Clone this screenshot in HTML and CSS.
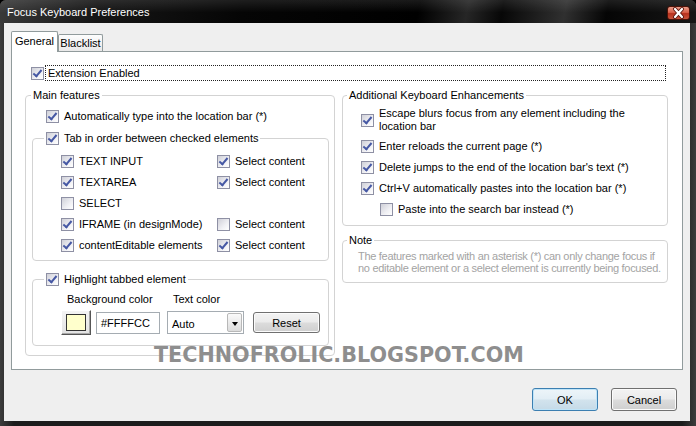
FILE: index.html
```html
<!DOCTYPE html>
<html>
<head>
    <title>Focus Keyboard Preferences</title>
    <link rel="stylesheet" href="styles.css">
</head>
<body>
    <div class="window">
        <div class="titlebar">
            <span class="title">Focus Keyboard Preferences</span>
            <span class="close">
                <svg width="23" height="14" viewBox="0 0 23 14">
                    <path d="M8 3 L15 11 M15 3 L8 11" stroke="#5a1810" stroke-width="4" stroke-linecap="round"/>
                    <path d="M8 3 L15 11 M15 3 L8 11" stroke="#fff" stroke-width="2.2" stroke-linecap="round"/>
                </svg>
            </span>
        </div>
        <div class="client">
            <div class="tabs">
                <div class="tab selected">General</div>
                <div class="tab">Blacklist</div>
            </div>
            <div class="panel">
                <div class="ext-row">
                    <span class="cb on"></span>
                    <span class="focus-label">Extension Enabled</span>
                </div>
                <div class="columns">
                    <fieldset class="group main">
                        <legend>Main features</legend>
                        <div class="row indent"><span class="cb on"></span>Automatically type into the location bar (*)</div>
                        <fieldset class="group sub">
                            <legend><span class="cb on"></span>Tab in order between checked elements</legend>
                            <div class="elements">
                                <div class="row"><span class="cb on"></span>TEXT INPUT</div>
                                <div class="row"><span class="cb on"></span>Select content</div>
                                <div class="row"><span class="cb on"></span>TEXTAREA</div>
                                <div class="row"><span class="cb on"></span>Select content</div>
                                <div class="row"><span class="cb"></span>SELECT</div>
                                <div class="row"></div>
                                <div class="row"><span class="cb on"></span>IFRAME (in designMode)</div>
                                <div class="row"><span class="cb"></span>Select content</div>
                                <div class="row"><span class="cb on"></span>contentEditable elements</div>
                                <div class="row"><span class="cb on"></span>Select content</div>
                            </div>
                        </fieldset>
                        <fieldset class="group sub highlight">
                            <legend><span class="cb on"></span>Highlight tabbed element</legend>
                            <div class="color-labels">
                                <span class="bg-label">Background color</span>
                                <span>Text color</span>
                            </div>
                            <div class="color-controls">
                                <span class="color-btn"><span class="swatch"></span></span>
                                <span class="textbox">#FFFFCC</span>
                                <span class="select">
                                    <span class="select-value">Auto</span>
                                    <span class="arrow"><span class="tri"></span></span>
                                </span>
                                <button class="btn reset">Reset</button>
                            </div>
                        </fieldset>
                    </fieldset>
                    <div class="right-col">
                        <fieldset class="group extra">
                            <legend>Additional Keyboard Enhancements</legend>
                            <div class="row two-line"><span class="cb on"></span><span>Escape blurs focus from any element including the<br>location bar</span></div>
                            <div class="row"><span class="cb on"></span>Enter reloads the current page (*)</div>
                            <div class="row"><span class="cb on"></span>Delete jumps to the end of the location bar's text (*)</div>
                            <div class="row"><span class="cb on"></span>Ctrl+V automatically pastes into the location bar (*)</div>
                            <div class="row nested"><span class="cb"></span>Paste into the search bar instead (*)</div>
                        </fieldset>
                        <fieldset class="group note">
                            <legend>Note</legend>
                            <p>The features marked with an asterisk (*) can only change focus if<br>no editable element or a select element is currently being focused.</p>
                        </fieldset>
                    </div>
                </div>
            </div>
            <div class="buttons">
                <button class="btn default">OK</button>
                <button class="btn">Cancel</button>
            </div>
        </div>
        <div class="watermark">TECHNOFROLIC.BLOGSPOT.COM</div>
    </div>
</body>
</html>
```

FILE: styles.css
```css
html, body {
    margin: 0;
}

body {
    width: 696px;
    height: 426px;
    overflow: hidden;
    background: #000;
    font-family: "Liberation Sans", Arial, sans-serif;
    font-size: 11px;
    color: #000;
}

.window {
    position: relative;
    width: 696px;
    height: 426px;
    display: flex;
    flex-direction: column;
    background: linear-gradient(90deg, #3c3c3c, #1c1c1c 2%, #1c1c1c 98%, #3c3c3c);
    border-radius: 6px 6px 0 0;
    overflow: hidden;
}

.titlebar {
    height: 23px;
    flex: none;
    display: flex;
    align-items: center;
    justify-content: space-between;
    padding: 0 6px 0 7px;
    color: #fff;
    background:
        linear-gradient(180deg, rgba(255, 255, 255, 0.1), rgba(255, 255, 255, 0) 55%),
        linear-gradient(100deg, #3a3a3a 0%, #161616 14%, #050505 35%, #000 60%, #262626 67%, #070707 72%, #303030 81%, #050505 87%, #161616 100%);
}

.title {
    font-size: 11px;
    padding-top: 1px;
}

.close {
    display: flex;
    width: 23px;
    height: 14px;
    margin-top: 2px;
    border-radius: 3px;
    box-sizing: border-box;
    border: 1px solid #4a1208;
    background: linear-gradient(#e89a88, #d8614a 45%, #b8301c 55%, #c8543c);
}

.close svg {
    margin: -1px;
}

.client {
    flex: 1;
    margin: 0 6px 5px 4px;
    padding: 8px 7px 0 7px;
    background: #efefef;
    display: flex;
    flex-direction: column;
}

/* tabs */
.tabs {
    display: flex;
    align-items: flex-end;
    height: 21px;
    margin-bottom: -1px;
    position: relative;
    z-index: 1;
}

.tab {
    box-sizing: border-box;
    border: 1px solid #919b9c;
    border-bottom: none;
    text-align: center;
    height: 17px;
    line-height: 16px;
    width: 45px;
    margin-bottom: 1px;
    background: linear-gradient(#fdfdfd, #e9e9e9);
    border-radius: 2px 2px 0 0;
}

.tab.selected {
    width: 47px;
    height: 21px;
    line-height: 19px;
    margin-bottom: 0;
    background: #fff;
}

.panel {
    height: 319px;
    flex: none;
    box-sizing: border-box;
    border: 1px solid #919b9c;
    background: #fff;
    padding: 13px 14px 0 13px;
}

/* checkboxes */
.cb {
    display: inline-block;
    flex: none;
    position: relative;
    width: 13px;
    height: 13px;
    box-sizing: border-box;
    border: 1px solid #8e90a4;
    background: linear-gradient(135deg, #cfd0d8, #f0f0f4 60%, #fff);
    margin-right: 5px;
    vertical-align: -3px;
}

.cb.on::after {
    content: "";
    position: absolute;
    left: 3px;
    top: 0px;
    width: 3px;
    height: 7px;
    border: solid #4658a4;
    border-width: 0 2px 2px 0;
    transform: rotate(40deg);
}

.ext-row {
    display: flex;
    align-items: center;
    height: 16px;
    margin: 0 2px 0 6px;
}

.ext-row .cb {
    margin-right: 1px;
}

.focus-label {
    flex: 1;
    border: 1px dotted #222;
    padding-left: 2px;
    line-height: 14px;
}

.columns {
    display: flex;
    align-items: flex-start;
    gap: 7px;
    margin-top: 7px;
}

/* group boxes */
fieldset.group {
    margin: 0;
    min-width: 0;
    border: 1px solid #d3d3d3;
    border-radius: 4px;
}

fieldset.group legend {
    padding: 0 2px;
    line-height: 14px;
}

fieldset.sub legend {
    display: flex;
    align-items: center;
}

.row {
    display: flex;
    align-items: center;
    padding: 4px 0;
    line-height: 13px;
    white-space: nowrap;
}

.main {
    width: 310px;
    box-sizing: border-box;
    padding: 4px 5px 9px 5px;
}

.row.indent {
    margin-left: 15px;
}

.sub {
    margin: 4px 0 0 1px !important;
    padding: 6px 5px 4px 11px;
}

.elements {
    display: grid;
    grid-template-columns: 156px auto;
    margin-left: 17px;
}

.elements .row {
    height: 13px;
}

.sub.highlight {
    margin-top: 11px !important;
    padding: 7px 5px 10px 11px;
}

.color-labels {
    display: flex;
    line-height: 13px;
    margin-left: 23px;
}

.bg-label {
    width: 106px;
}

.color-controls {
    display: flex;
    align-items: center;
    height: 25px;
    margin: 4px 0 0 17px;
}

.color-btn {
    width: 30px;
    height: 25px;
    box-sizing: border-box;
    display: flex;
    align-items: center;
    justify-content: center;
    border: 1px solid;
    border-color: #fff #555 #555 #fff;
    box-shadow: inset -1px -1px #a8a8a8;
    background: linear-gradient(#f4f4f4, #e2e2e2);
}

.swatch {
    width: 20px;
    height: 17px;
    box-sizing: border-box;
    border: 1px solid #333;
    background: #ffffcc;
}

.textbox {
    width: 64px;
    height: 22px;
    box-sizing: border-box;
    margin-left: 5px;
    border: 1px solid #a5acb2;
    padding-left: 4px;
    line-height: 20px;
    background: #fff;
}

.select {
    display: flex;
    width: 77px;
    height: 23px;
    box-sizing: border-box;
    margin-left: 7px;
    border: 1px solid #a5acb2;
    background: #fff;
}

.select-value {
    padding: 4px 0 0 4px;
    line-height: 16px;
}

.arrow {
    margin: 1px 1px 1px auto;
    width: 15px;
    box-sizing: border-box;
    border: 1px solid #b8b8b8;
    border-radius: 2px;
    background: linear-gradient(#fafafa, #dcdcdc);
    display: flex;
    align-items: center;
    justify-content: center;
}

.tri {
    width: 0;
    height: 0;
    margin-top: 2px;
    border-top: 4px solid #000;
    border-left: 3.5px solid transparent;
    border-right: 3.5px solid transparent;
}

/* buttons */
.btn {
    width: 66px;
    height: 23px;
    box-sizing: border-box;
    padding: 0;
    font-family: inherit;
    font-size: 11px;
    color: #000;
    border: 1px solid #707070;
    border-radius: 3px;
    background: linear-gradient(#f3f3f3, #ebebeb 48%, #dcdcdc 52%, #cfcfcf);
    box-shadow: inset 0 0 0 1px #fbfbfb;
}

.btn.reset {
    width: 67px;
    height: 21px;
    margin-left: 9px;
}

.btn.default {
    border-color: #3c7fb1;
    background: linear-gradient(#edf5f9, #e2eef5 48%, #d2e3ed 52%, #c5dae7);
    box-shadow: inset 0 0 0 1px #bfe4f8;
}

.buttons {
    display: flex;
    justify-content: flex-end;
    gap: 13px;
    margin-top: 18px;
    padding-right: 6px;
}

/* right column */
.right-col {
    width: 326px;
    display: flex;
    flex-direction: column;
    gap: 7px;
}

.extra {
    padding: 2px 5px 5px 4px;
}

.extra .row {
    margin-left: 14px;
}

.extra .row.nested {
    margin-left: 33px;
}

.row.two-line {
    padding: 3px 0;
}

.note {
    padding: 3px 5px 8px 4px;
}

.note p {
    margin: 0 0 0 11px;
    line-height: 12px;
    color: #a3a3a3;
    letter-spacing: -0.3px;
    white-space: nowrap;
}

.watermark {
    position: absolute;
    left: 154px;
    top: 345px;
    font-family: "DejaVu Sans", sans-serif;
    font-weight: bold;
    font-size: 20.7px;
    line-height: 21px;
    color: #8e8e8e;
}
```
